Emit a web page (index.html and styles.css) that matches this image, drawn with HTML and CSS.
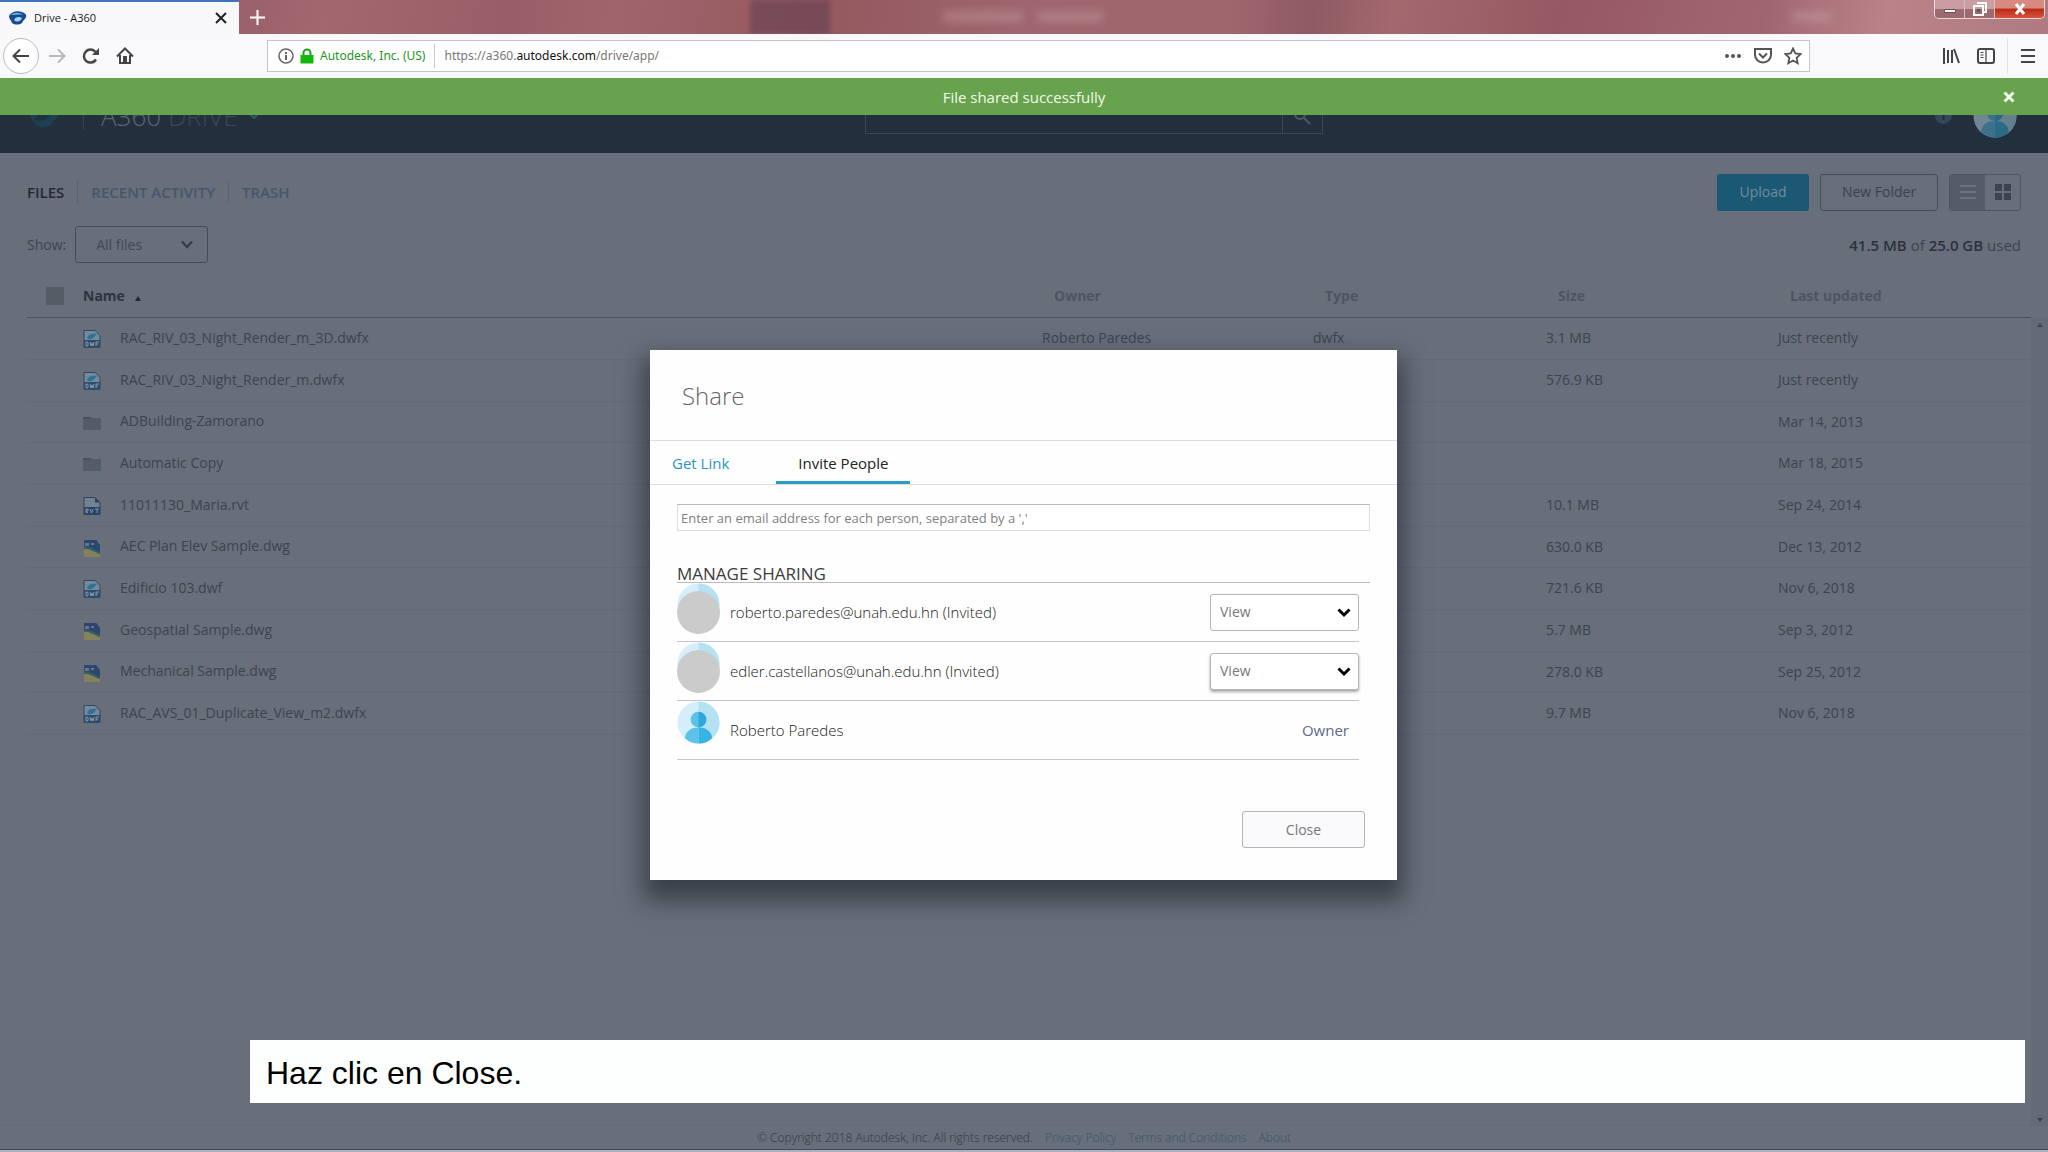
FILE: index.html
```html
<!DOCTYPE html>
<html lang="es">
<head>
<meta charset="utf-8">
<title>Drive - A360</title>
<link rel="stylesheet" href="styles.css">
</head>
<body>
<svg class="defs" aria-hidden="true">
  <symbol id="i-dwf" viewBox="0 0 18 18"><path d="M1 .5h11l5 5v12H1z" fill="#75899b" stroke="#2c4a66"/><path d="M4 8c1-4 5-5 10-4-2 1-2 4-6 5-2 .4-3 0-4-1z" fill="#2f7096"/><path d="M1 10h16v8H1z" fill="#2c4d6b"/><path d="M3 12v4h1.500q1.500-2 0-4zM7 12l1 4 1-3 1 3 1-4M13 16v-4h3M13 14h2" fill="none" stroke="#8797a8"/></symbol>
  <symbol id="i-rvt" viewBox="0 0 18 18"><path d="M1 .5h11l5 5v12H1z" fill="#75818f" stroke="#2c4460"/><path d="M12 .5v5h5z" fill="#2c4460"/><path d="M1 10h16v8H1z" fill="#2b4464"/><path d="M3 16v-4h2v2H3l2 2M7 12l1.500 4 1.500-4M12 12h4M14 12v4" fill="none" stroke="#8792a5"/></symbol>
  <symbol id="i-dwg" viewBox="0 0 18 18"><path d="M1 1h12l4 5v11H1z" fill="#2d6068"/><path d="M1 1h12l4 5v7L9 9 1 7z" fill="#2e4570"/><path d="M2 4h4v3H2zM8 4h3v2H8z" fill="#66788c"/><path d="M1 10c5-1 9 3 16 5v3H1z" fill="#85815a"/></symbol>
  <symbol id="i-folder" viewBox="0 0 18 18"><path d="M0 3h8l1 1h9v12H0z" fill="#535d68"/><path d="M0 3h8v2H0z" fill="#475260"/></symbol>
  <symbol id="i-person" viewBox="0 0 44 44"><circle cx="22" cy="22" r="21.500" fill="#d4eefa"/><path d="M22 .5a21.500 21.500 0 0 1 0 43z" fill="#b5e2f2"/><path d="M8 38c1-8 7-11 14-11v16.500c-6 0-10-2-14-5.500z" fill="#5cc2ea"/><path d="M36 38c-1-8-7-11-14-11v16.500c6 0 10-2 14-5.500z" fill="#36b4e2"/><circle cx="22" cy="19" r="8" fill="#5cc2ea"/><path d="M22 11a8 8 0 0 1 0 16z" fill="#2fa9da"/></symbol>
</svg>

<header class="titlebar">
  <div class="tab">
    <svg class="favicon" viewBox="0 0 18 14"><path d="M0 5C2 1 8-1 13 1c3 1 5 3 4 5-1 3-3 3-4 6-3 2-7 2-10 0C2 9 0 8 0 5z" fill="#174a91"/><path d="M2 4c3-3 9-3 12 0-4-1-8 0-12 0z" fill="#6fb4e8"/><path d="M5 9c1-3 5-4 8-2-1 3-5 5-8 2z" fill="#a4d4f5"/></svg>
    <span class="tab-title">Drive - A360</span>
    <button class="plain" aria-label="Cerrar pestaña"><svg width="12" height="12" viewBox="0 0 12 12"><path d="M1 1l10 10M11 1L1 11" stroke="#222" stroke-width="2"/></svg></button>
  </div>
  <button class="plain newtab" aria-label="Nueva pestaña"><svg width="15" height="15" viewBox="0 0 15 15"><path d="M7.500 0v15M0 7.500h15" stroke="#fff" stroke-width="2"/></svg></button>
  <div class="glass"><i class="ghost ghost-a"></i><i class="ghost ghost-b"></i><i class="ghost ghost-c"></i><i class="ghost ghost-d"></i></div>
  <div class="winbuttons">
    <button aria-label="Minimizar"><svg width="14" height="14" viewBox="0 0 14 14"><path d="M1.500 7.500h11v3h-11z" fill="#fff" stroke="#6b5054"/></svg></button>
    <button aria-label="Restaurar"><svg width="14" height="14" viewBox="0 0 14 14"><path d="M4 1h9v9h-3M1 4h9v9H1z" fill="none" stroke="#fff" stroke-width="2"/><path d="M4 7h3v3H4z" fill="#6b5054"/></svg></button>
    <button class="win-close" aria-label="Cerrar"><svg width="12" height="12" viewBox="0 0 12 12"><path d="M2 1l8 10M10 1L2 11" stroke="#fff" stroke-width="3"/></svg></button>
  </div>
</header>

<nav class="toolbar">
  <button class="plain back" aria-label="Atrás"><svg width="18" height="16" viewBox="0 0 18 16"><path d="M17 8H2M8 1.500L1.500 8 8 14.500" fill="none" stroke="#444" stroke-width="2"/></svg></button>
  <button class="plain" aria-label="Adelante"><svg width="18" height="16" viewBox="0 0 18 16"><path d="M1 8h15M10 1.500L16.500 8 10 14.500" fill="none" stroke="#b8b8ba" stroke-width="2"/></svg></button>
  <button class="plain" aria-label="Recargar"><svg width="18" height="18" viewBox="0 0 18 18"><path d="M14 12.500A6.500 6.500 0 1 1 13.500 5" fill="none" stroke="#444" stroke-width="2.500"/><path d="M17 1v7h-7z" fill="#444"/></svg></button>
  <button class="plain" aria-label="Inicio"><svg width="18" height="18" viewBox="0 0 18 18"><path d="M1 9.500L9 1.500l8 8M4 8v8h10V8" fill="none" stroke="#444" stroke-width="2"/><path d="M7 9h4v7H7z" fill="#444"/></svg></button>
  <div class="urlbar">
    <svg width="16" height="16" viewBox="0 0 16 16"><circle cx="8" cy="8" r="7" fill="none" stroke="#666" stroke-width="1.500"/><path d="M8 7v5M8 4v2" stroke="#666" stroke-width="2"/></svg>
    <svg width="14" height="16" viewBox="0 0 14 16"><path d="M3.500 8V5a3.500 3.500 0 0 1 7 0v3" fill="none" stroke="#12a912" stroke-width="2"/><path d="M.5 7h13v8.500H.5z" fill="#12b80c"/></svg>
    <span class="site-owner">Autodesk, Inc. (US)</span>
    <span class="url">https://a360.<b>autodesk.com</b>/drive/app/</span>
    <svg width="18" height="6" viewBox="0 0 18 6"><path d="M1 3a2 2 0 1 0 4 0 2 2 0 1 0-4 0M7 3a2 2 0 1 0 4 0 2 2 0 1 0-4 0M13 3a2 2 0 1 0 4 0 2 2 0 1 0-4 0" fill="#555"/></svg>
    <svg width="18" height="16" viewBox="0 0 18 16"><path d="M1 1h16v6a8 7.500 0 0 1-16 0z" fill="none" stroke="#555" stroke-width="2"/><path d="M5 5.500l4 4 4-4" fill="none" stroke="#555" stroke-width="2"/></svg>
    <svg width="18" height="18" viewBox="0 0 18 18"><path d="M9 1.500l2.300 5 5.300.6-4 3.700 1.100 5.400L9 13.500l-4.700 2.700 1.100-5.400-4-3.700 5.300-.6z" fill="none" stroke="#555" stroke-width="1.800"/></svg>
  </div>
  <div class="tools">
    <svg width="17" height="16" viewBox="0 0 17 16"><path d="M1 0v16M5 2v13M9 2v13M11 1l5 14" stroke="#444" stroke-width="2" fill="none"/></svg>
    <svg width="18" height="16" viewBox="0 0 18 16"><rect x="1" y="1" width="16" height="14" rx="2" fill="none" stroke="#444" stroke-width="2"/><path d="M9 1v14M3.500 4.500h3M3.500 7h3M3.500 9.500h3" stroke="#444" stroke-width="1.200"/></svg>
    <button class="plain menu" aria-label="Menú"><svg width="14" height="14" viewBox="0 0 14 14"><path d="M0 1h14M0 7h14M0 13h14" stroke="#444" stroke-width="2"/></svg></button>
  </div>
</nav>

<div class="app">
  <header class="appbar">
    <svg class="applogo" width="32" height="24" viewBox="0 0 18 14"><path d="M0 5C2 1 8-1 13 1c3 1 5 3 4 5-1 3-3 3-4 6-3 2-7 2-10 0C2 9 0 8 0 5z" fill="#1e4055"/><path d="M3 9c2-4 6-5 9-3-1 3-5 5-9 3z" fill="#22303e"/></svg>
    <span class="brand">A360 <em>DRIVE</em></span>
    <svg width="12" height="8" viewBox="0 0 12 8"><path d="M1 1l5 5 5-5" fill="none" stroke="#2b5a66" stroke-width="2"/></svg>
    <form class="search"><input type="text" aria-label="Search"><button type="button" aria-label="Search"><svg width="18" height="18" viewBox="0 0 18 18"><circle cx="7" cy="7" r="5" fill="none" stroke="#4d5863" stroke-width="2"/><path d="M11 11l6 6" stroke="#4d5863" stroke-width="2"/></svg></button></form>
    <svg class="help" width="17" height="17" viewBox="0 0 17 17"><circle cx="8.500" cy="8.500" r="8.500" fill="#34465c"/><path d="M8.500 7v6" stroke="#22303e" stroke-width="2"/></svg>
    <svg class="me" width="44" height="44"><use href="#i-person"/></svg>
  </header>

  <main class="content">
    <div class="bar">
      <nav class="sections"><a class="current" href="#files">FILES</a><a href="#recent">RECENT ACTIVITY</a><a href="#trash">TRASH</a></nav>
      <div class="actions">
        <button class="upload">Upload</button>
        <button class="newfolder">New Folder</button>
        <div class="views">
          <button class="on" aria-label="List"><svg width="16" height="16" viewBox="0 0 16 16"><path d="M0 2h16M0 8h16M0 14h16" stroke="#6c727d" stroke-width="2"/></svg></button>
          <button aria-label="Grid"><svg width="16" height="16" viewBox="0 0 16 16"><path d="M0 0h7v7H0zM9 0h7v7H9zM0 9h7v7H0zM9 9h7v7H9z" fill="#3b4350"/></svg></button>
        </div>
      </div>
    </div>
    <div class="bar filter">
      <div class="show"><label for="show">Show:</label><span class="picker"><select id="show"><option>All files</option></select><svg width="12" height="9" viewBox="0 0 12 9"><path d="M1 1.500l5 5.500 5-5.500" fill="none" stroke="#363e4a" stroke-width="2.500"/></svg></span></div>
      <p class="quota"><b>41.5 MB</b> of <b>25.0 GB</b> used</p>
    </div>
    <div class="listing">
      <table>
        <colgroup><col class="c-check"><col><col class="c-owner"><col class="c-type"><col class="c-size"><col class="c-date"></colgroup>
        <thead><tr><th><input type="checkbox" aria-label="Select all"></th><th class="name">Name <span class="asc"></span></th><th>Owner</th><th>Type</th><th>Size</th><th>Last updated</th></tr></thead>
        <tbody>
          <tr><td></td><td><svg><use href="#i-dwf"/></svg>RAC_RIV_03_Night_Render_m_3D.dwfx</td><td>Roberto Paredes</td><td>dwfx</td><td>3.1 MB</td><td>Just recently</td></tr>
          <tr><td></td><td><svg><use href="#i-dwf"/></svg>RAC_RIV_03_Night_Render_m.dwfx</td><td></td><td></td><td>576.9 KB</td><td>Just recently</td></tr>
          <tr><td></td><td><svg><use href="#i-folder"/></svg>ADBuilding-Zamorano</td><td></td><td></td><td></td><td>Mar 14, 2013</td></tr>
          <tr><td></td><td><svg><use href="#i-folder"/></svg>Automatic Copy</td><td></td><td></td><td></td><td>Mar 18, 2015</td></tr>
          <tr><td></td><td><svg><use href="#i-rvt"/></svg>11011130_Maria.rvt</td><td></td><td></td><td>10.1 MB</td><td>Sep 24, 2014</td></tr>
          <tr><td></td><td><svg><use href="#i-dwg"/></svg>AEC Plan Elev Sample.dwg</td><td></td><td></td><td>630.0 KB</td><td>Dec 13, 2012</td></tr>
          <tr><td></td><td><svg><use href="#i-dwf"/></svg>Edificio 103.dwf</td><td></td><td></td><td>721.6 KB</td><td>Nov 6, 2018</td></tr>
          <tr><td></td><td><svg><use href="#i-dwg"/></svg>Geospatial Sample.dwg</td><td></td><td></td><td>5.7 MB</td><td>Sep 3, 2012</td></tr>
          <tr><td></td><td><svg><use href="#i-dwg"/></svg>Mechanical Sample.dwg</td><td></td><td></td><td>278.0 KB</td><td>Sep 25, 2012</td></tr>
          <tr><td></td><td><svg><use href="#i-dwf"/></svg>RAC_AVS_01_Duplicate_View_m2.dwfx</td><td></td><td></td><td>9.7 MB</td><td>Nov 6, 2018</td></tr>
        </tbody>
      </table>
      <div class="scroller"><span class="up"></span><span class="down"></span></div>
    </div>
  </main>

  <footer class="footer"><span>© Copyright 2018 Autodesk, Inc. All rights reserved.</span><a href="#privacy">Privacy Policy</a><a href="#terms">Terms and Conditions</a><a href="#about">About</a></footer>

  <div class="banner" role="status"><span>File shared successfully</span><button class="plain" aria-label="Dismiss"><svg width="12" height="12" viewBox="0 0 12 12"><path d="M1.500 1.500l9 9M10.500 1.500l-9 9" stroke="#f2fbe9" stroke-width="3"/></svg></button></div>

  <section class="modal" role="dialog" aria-labelledby="share-title">
    <h1 id="share-title">Share</h1>
    <nav class="modal-tabs"><a href="#link">Get Link</a><a class="active" href="#invite">Invite People</a></nav>
    <div class="modal-body">
      <input class="emails" type="text" aria-label="Email addresses" placeholder="Enter an email address for each person, separated by a ','">
      <h2>MANAGE SHARING</h2>
      <ul class="people">
        <li><span class="avatar invited"><svg><use href="#i-person"/></svg></span><label for="p1">roberto.paredes@unah.edu.hn (Invited)</label><span class="picker"><select id="p1"><option>View</option></select><svg width="14" height="10" viewBox="0 0 14 10"><path d="M1.500 1.500L7 7l5.500-5.500" fill="none" stroke="#000" stroke-width="3"/></svg></span></li>
        <li><span class="avatar invited"><svg><use href="#i-person"/></svg></span><label for="p2">edler.castellanos@unah.edu.hn (Invited)</label><span class="picker focus"><select id="p2"><option>View</option></select><svg width="14" height="10" viewBox="0 0 14 10"><path d="M1.500 1.500L7 7l5.500-5.500" fill="none" stroke="#000" stroke-width="3"/></svg></span></li>
        <li><span class="avatar"><svg><use href="#i-person"/></svg></span><span class="person">Roberto Paredes</span><span class="role">Owner</span></li>
      </ul>
      <button class="close">Close</button>
    </div>
  </section>

  <p class="caption">Haz clic en Close.</p>
</div>
<div class="taskbar"></div>
</body>
</html>
```

FILE: styles.css
```css
* { box-sizing: border-box; }
body {
  margin: 0;
  min-height: 100vh;
  display: flex;
  flex-direction: column;
  font: 14px/20px "Open Sans", "Noto Sans", sans-serif;
  background: #686e7a;
  overflow: hidden;
}
button, input, select { font: inherit; color: inherit; margin: 0; }
a { text-decoration: none; color: inherit; }
p, h1, h2, ul { margin: 0; padding: 0; }
svg { flex: none; display: block; }
.defs { position: absolute; width: 0; height: 0; }
.plain { border: 0; background: none; padding: 0; display: flex; align-items: center; justify-content: center; }

/* Browser window */
.titlebar {
  height: 34px;
  display: flex;
  align-items: center;
  background: linear-gradient(100deg, #9c626b 0 13%, #a3676f 16%, #985d66 25%, #a0656c 30%, #94585e 40%, #9e666e 50%, #a0666e 60%, #8f5a62 64%, #a3696f 68%, #965862 76%, #a06670 86%, #b98388 92%, #b07a82 100%);
}
.tab {
  align-self: stretch;
  width: 239px;
  flex: none;
  display: flex;
  align-items: center;
  gap: 7px;
  padding: 0 12px 0 9px;
  background: #f8f8fb;
  border-top: 2px solid #3d74bb;
}
.favicon { width: 18px; height: 14px; }
.tab-title { flex: 1; font: 11px/16px "Open Sans", "Noto Sans", sans-serif; color: #222; }
.newtab { width: 36px; height: 34px; }
.glass { flex: 1; position: relative; align-self: stretch; overflow: hidden; }
.ghost { position: absolute; top: 11px; height: 11px; width: 54px; background: #d5a7ad; opacity: .35; filter: blur(4px); }
.ghost-a { top: 0; left: 475px; width: 80px; height: 34px; background: #5c3c52; opacity: .5; filter: blur(2px); }
.ghost-b { left: 668px; width: 80px; }
.ghost-c { left: 762px; width: 66px; }
.ghost-d { right: 102px; width: 40px; }
.winbuttons { display: flex; align-self: flex-start; height: 19px; margin-right: 3px; border: 1px solid #ecd9dc; border-top: 0; border-radius: 0 0 5px 5px; overflow: hidden; }
.winbuttons button { width: 30px; padding: 0; border: 0; border-right: 1px solid #d7bcc0; background: linear-gradient(#c99da2 50%, #9b6b70 50%); display: flex; align-items: center; justify-content: center; }
.winbuttons .win-close { width: 49px; border: 0; background: linear-gradient(#d98a80 45%, #b92a18 50%, #d8533c); }
.toolbar {
  height: 44px;
  display: flex;
  align-items: center;
  gap: 16px;
  padding: 0 13px 0 3px;
  background: #f9f9fb;
  font-family: "Noto Sans", sans-serif;
}
.back { width: 36px; height: 36px; margin-right: -7px; border: 1px solid #bbb; border-radius: 50%; background: #fff; }
.urlbar {
  flex: 1;
  max-width: 1543px;
  height: 32px;
  margin-left: 117px;
  display: flex;
  align-items: center;
  gap: 12px;
  padding: 0 7px 0 10px;
  border: 1px solid #c4c4c8;
  background: #fff;
  font-size: 12px;
}
.urlbar > svg:nth-child(2) { margin-left: -6px; }
.site-owner { color: #1e961e; margin-left: -6px; padding-right: 9px; border-right: 1px solid #c8c8c8; line-height: 24px; }
.url { flex: 1; margin-left: -3px; color: #777; }
.url b { font-weight: 400; color: #111; }
.tools { margin-left: auto; display: flex; align-items: center; gap: 17px; }
.menu { height: 36px; padding-left: 13px; margin-left: -5px; border-left: 1px solid #e2e2e4; }

/* Drive page behind the dialog */
.app { flex: 1; position: relative; display: flex; flex-direction: column; color: #3c4450; }
.appbar { height: 75px; display: flex; align-items: center; padding: 0 31px 0 29px; background: #222f3d; }
.brand { margin: 0 10px 0 22px; padding-left: 17px; border-left: 1px solid #37434f; font-size: 26px; line-height: 28px; font-weight: 300; color: #5d6873; }
.brand em { font-style: normal; color: #3c4853; }
.search { margin: 0 auto 0 605px; width: 458px; height: 36px; display: flex; border: 1px solid #3b4753; }
.search input { flex: 1; border: 0; background: none; }
.search button { width: 40px; border: 0; border-left: 1px solid #3b4753; background: none; display: flex; align-items: center; justify-content: center; }
.help { margin-right: 21px; }
.me { opacity: .45; }
.content { flex: 1; display: flex; flex-direction: column; padding: 20px 0 0 27px; }
.bar { display: flex; justify-content: space-between; align-items: center; height: 38px; padding-right: 27px; }
.filter { margin-top: 15px; height: 37px; }
.sections { display: flex; font-size: 15px; line-height: 22px; font-weight: 600; color: #46566f; }
.sections a + a { margin-left: 13px; padding-left: 13px; border-left: 1px solid #5c6370; }
.sections .current { color: #222a35; }
.actions { display: flex; gap: 11px; height: 37px; color: #3a424e; }
.actions button { border: 1px solid #474e5a; border-radius: 3px; background: none; padding: 0; }
.actions .upload { width: 92px; border: 0; background: #1a5873; color: #738c9c; }
.actions .newfolder { width: 118px; }
.views { display: flex; width: 72px; border: 1px solid #4e5561; border-radius: 3px; }
.views button { flex: 1; border: 0; border-radius: 0; display: flex; align-items: center; justify-content: center; }
.views .on { background: #555c68; }
.show { display: flex; align-items: center; gap: 9px; }
.picker { position: relative; display: inline-flex; }
.picker select { appearance: none; width: 133px; height: 37px; padding: 0 20px; border: 1px solid #454c58; border-radius: 3px; background: none; color: #414956; font-size: 14px; font-weight: 400; }
.picker svg { position: absolute; right: 15px; top: 14px; pointer-events: none; }
.quota { font-size: 15px; }
.quota b { font-weight: 600; color: #2a323e; }
.listing { flex: 1; display: flex; align-items: flex-start; margin-top: 12px; }
table { flex: 1; border-collapse: collapse; table-layout: fixed; }
.c-check { width: 56px; }
.c-owner { width: 271px; }
.c-type { width: 233px; }
.c-size { width: 232px; }
.c-date { width: 253px; }
th { height: 42px; padding: 0 0 0 12px; text-align: left; font-weight: 700; color: #4d5561; border-bottom: 1px solid #4a515d; }
th.name { padding-left: 0; color: #2c3440; }
th:first-child { padding: 0 0 0 19px; }
th input { appearance: none; width: 18px; height: 18px; background: #545c65; display: block; }
.asc { display: inline-block; margin-left: 6px; border: 3px solid transparent; border-top: 0; border-bottom: 5px solid #222a35; }
td { height: 42px; padding: 0; border-bottom: 1px solid #636975; white-space: nowrap; }
tbody tr:nth-child(3n) td { height: 41px; }
td svg { display: inline-block; width: 18px; height: 18px; margin-right: 19px; vertical-align: middle; }
.scroller { align-self: stretch; width: 17px; margin-top: 42px; padding: 6px 0 3px; background: #646a76; display: flex; flex-direction: column; justify-content: space-between; align-items: center; }
.scroller span { border: 3px solid transparent; }
.scroller .up { border-top: 0; border-bottom: 4px solid #3c4450; }
.scroller .down { border-bottom: 0; border-top: 4px solid #3c4450; }
.footer { height: 24px; display: flex; justify-content: center; align-items: center; gap: 12px; border-top: 1px solid #646a76; font-size: 12px; line-height: 22px; font-weight: 300; color: #303845; }
.footer a { color: #35566a; }

/* Overlays */
.banner { position: absolute; top: 0; left: 0; right: 0; height: 37px; padding-right: 33px; display: flex; align-items: center; background: #67a34d; color: #f2fbe9; font-size: 15px; }
.banner span { flex: 1; text-align: center; padding-left: 45px; }
.modal { position: absolute; top: 272px; left: 50%; width: 747px; margin-left: -374px; padding-bottom: 32px; background: #fefefe; box-shadow: 0 14px 22px 6px rgba(20, 26, 32, .55); color: #444; }
.modal h1 { height: 91px; padding: 0 32px; font-size: 24px; line-height: 92px; font-weight: 300; color: #666; border-bottom: 1px solid #ddd; }
.modal-tabs { display: flex; height: 44px; border-bottom: 1px solid #ddd; font-size: 15px; line-height: 44px; color: #2a96bf; }
.modal-tabs a { padding: 0 22px; }
.modal-tabs a + a { margin-left: 25px; }
.modal-tabs .active { color: #222; border-bottom: 3px solid #2a9dc7; }
.modal-body { padding: 19px 27px 0; display: flex; flex-direction: column; }
.emails { height: 27px; padding: 0 3px; border: 1px solid #ddd; border-top-color: #bbb; background: #fff; font-size: 13px; }
.emails::placeholder { color: #808080; opacity: 1; }
h2 { margin-top: 28px; height: 24px; border-bottom: 1px solid #bbb; font-size: 17px; line-height: 29px; font-weight: 400; color: #3c3c3c; }
.people { list-style: none; margin-right: 11px; }
.people li { height: 59px; display: flex; align-items: center; border-bottom: 1px solid #c6c6ca; font-size: 15px; font-weight: 300; color: #222; }
.avatar { position: relative; align-self: flex-start; width: 43px; height: 51px; margin-right: 10px; }
.avatar svg { width: 43px; height: 43px; }
.invited::after { content: ""; position: absolute; left: 0; bottom: 0; width: 43px; height: 43px; border-radius: 50%; background: #cbcbcb; }
.people label, .person { flex: 1; }
.people select { width: 149px; padding: 0 9px; border-color: #b4b4b8; background: #fff; color: #777; }
.people .picker svg { right: 8px; }
.focus select { box-shadow: 0 2px 3px rgba(0, 0, 0, .35); }
.role { font-weight: 400; color: #5c6a8a; margin-right: 10px; }
.close { align-self: flex-end; width: 123px; height: 37px; margin: 51px 5px 0 0; border: 1px solid #b4b4b8; border-radius: 3px; background: #faf9fb; color: #777; }
.caption { position: absolute; left: 250px; right: 23px; bottom: 46px; height: 63px; padding-left: 16px; background: #fdfefe; color: #000; font: 32px/66px "Liberation Sans", Arial, sans-serif; }
.taskbar { height: 3px; border-top: 1px solid #404a5c; background: #aab0bc; }
```
